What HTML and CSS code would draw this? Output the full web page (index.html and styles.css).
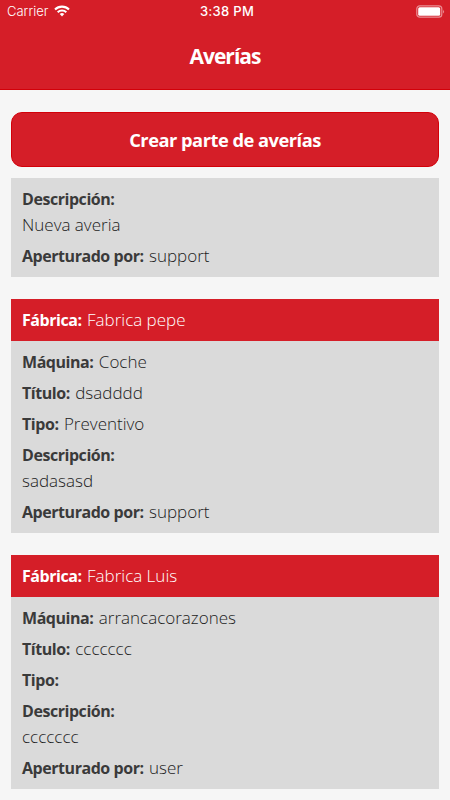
FILE: index.html
```html
<!DOCTYPE html>
<html lang="es">
<head>
    <meta charset="UTF-8">
    <title>Averías</title>
    <link rel="stylesheet" href="styles.css">
</head>
<body>
    <header class="header">
        <!-- Status bar -->
        <div class="status-bar">
            <div class="carrier">
                <span>Carrier</span>
                <svg class="wifi" width="16" height="12" viewBox="0 0 16 12" fill="none" stroke="#fff" stroke-width="2.1">
                    <path d="M1 4.5a10 10 0 0 1 14 0"/>
                    <path d="M3.7 7.2a6.2 6.2 0 0 1 8.6 0"/>
                    <path d="M5.7 9a3.3 3.3 0 0 1 4.6 0L8 11.4z" fill="#fff" stroke="none"/>
                </svg>
            </div>
            <div class="time">3:38 PM</div>
            <svg class="battery" width="29" height="13" viewBox="0 0 29 13">
                <rect x="0.8" y="0.8" width="25" height="11.4" rx="3" fill="none" stroke="#fff" stroke-opacity="0.5" stroke-width="1.2"/>
                <rect x="2.2" y="2.2" width="22" height="8.6" rx="1.5" fill="#fff"/>
                <path d="M27.2 4.5q1.6 2 0 4z" fill="#fff" fill-opacity="0.6"/>
            </svg>
        </div>
        <h1>Averías</h1>
    </header>

    <main class="content">
        <button type="button" class="create">Crear parte de averías</button>

        <!-- List of reports -->
        <div class="card">
            <div class="card-body">
                <p><b>Descripción:</b><br><span>Nueva averia</span></p>
                <p><b>Aperturado por:</b> <span>support</span></p>
            </div>
        </div>

        <div class="card">
            <div class="card-header"><b>Fábrica:</b> <span>Fabrica pepe</span></div>
            <div class="card-body">
                <p><b>Máquina:</b> <span>Coche</span></p>
                <p><b>Título:</b> <span>dsadddd</span></p>
                <p><b>Tipo:</b> <span>Preventivo</span></p>
                <p><b>Descripción:</b><br><span>sadasasd</span></p>
                <p><b>Aperturado por:</b> <span>support</span></p>
            </div>
        </div>

        <div class="card">
            <div class="card-header"><b>Fábrica:</b> <span>Fabrica Luis</span></div>
            <div class="card-body">
                <p><b>Máquina:</b> <span>arrancacorazones</span></p>
                <p><b>Título:</b> <span>ccccccc</span></p>
                <p><b>Tipo:</b></p>
                <p><b>Descripción:</b><br><span>ccccccc</span></p>
                <p><b>Aperturado por:</b> <span>user</span></p>
            </div>
        </div>
    </main>
</body>
</html>
```

FILE: styles.css
```css
body {
    font-family: "Open Sans", "Noto Sans", sans-serif;
    height: 800px;
    overflow: hidden;
    background-color: #f6f6f6;
    margin: 0;
    color: #3a3a3a;
    font-size: 17px;
}

.header {
    height: 90px;
    background: #d51e28;
    color: #fff;
    box-shadow: inset 0 -1px #d30009;
}

.status-bar {
    display: grid;
    grid-template-columns: 1fr auto 1fr;
    align-items: center;
    height: 22px;
    padding: 0 5px 0 7px;
    font-family: Inter, Roboto, sans-serif;
    font-size: 13px;
}

.carrier {
    display: flex;
    align-items: center;
    gap: 6px;
    font-weight: 300;
}

.time {
    font-weight: 500;
    letter-spacing: 0.3px;
    margin-left: 2px;
}

.battery {
    justify-self: end;
}

h1 {
    margin: 0;
    text-align: center;
    font-size: 21px;
    line-height: 68px;
    letter-spacing: -1px;
}

.content {
    padding: 22px 11px 0;
}

.create {
    display: block;
    width: 100%;
    height: 55px;
    margin-bottom: 11px;
    border: 1px solid #d30009;
    border-radius: 11px;
    background: #d51e28;
    color: #fff;
    font-family: inherit;
    font-size: 18.3px;
    font-weight: bold;
    letter-spacing: -0.5px;
}

.card {
    margin-bottom: 22px;
    line-height: 26px;
}

.card-header {
    padding: 8px 11px;
    background: #d51e28;
    color: #fff;
}

.card-body {
    padding: 8px 11px 8px;
    background: #dadada;
}

.card b {
    font-size: 16px;
    letter-spacing: -0.45px;
    margin-right: 1px;
}

.card span {
    font-weight: 300;
}

.card-body span {
    color: #1c1c1c;
}

.card p {
    margin: 0 0 5px;
}

.card p:last-child {
    margin-bottom: 0;
}
```
